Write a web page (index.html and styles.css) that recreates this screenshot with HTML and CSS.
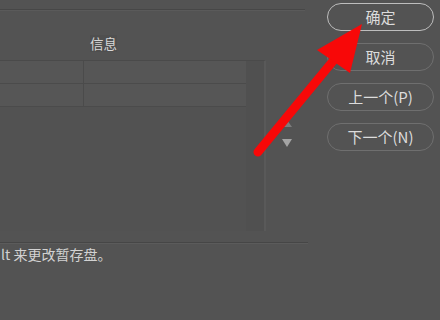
FILE: index.html
```html
<!DOCTYPE html>
<html lang="zh">
<head>
<meta charset="utf-8">
<link rel="stylesheet" href="styles.css">
</head>
<body>
<div class="page">
  <div class="left">
    <div class="top-rule"></div>
    <div class="head"><span class="head-label">信息</span></div>
    <div class="mid">
      <div class="listbox">
        <div class="rows">
          <div class="row"><div class="c1"></div><div class="c2"></div></div>
          <div class="row"><div class="c1"></div><div class="c2"></div></div>
        </div>
        <div class="scroll"></div>
      </div>
      <div class="spin">
        <span class="tri up"></span>
        <span class="tri down"></span>
      </div>
    </div>
    <div class="bottom-rule"></div>
    <div class="note">lt 来更改暂存盘。</div>
  </div>
  <div class="buttons">
    <div class="btn focus">确定</div>
    <div class="btn">取消</div>
    <div class="btn">上一个(P)</div>
    <div class="btn">下一个(N)</div>
  </div>
  <svg class="arrow" width="440" height="320" viewBox="0 0 440 320">
    <line x1="258" y1="152" x2="338" y2="55" stroke="#f80808" stroke-width="9" stroke-linecap="round"/>
    <polygon points="362,24 317,50 350,73" fill="#f80808"/>
  </svg>
</div>
</body>
</html>
```
FILE: styles.css
```css
html, body {
  margin: 0;
  padding: 0;
  background: #535353;
}
.page {
  position: relative;
  width: 440px;
  height: 320px;
  overflow: hidden;
  display: flex;
  font-family: "Noto Sans CJK SC", "Noto Sans", sans-serif;
  color: #d4d4d4;
}
.left {
  width: 308px;
  display: flex;
  flex-direction: column;
}
.top-rule {
  margin-top: 9px;
  width: 305px;
  height: 1px;
  background: #474747;
  border-bottom: 1px solid #5a5a5a;
}
.head {
  height: 49px;
  display: flex;
  align-items: flex-end;
  padding-left: 90px;
  padding-bottom: 8px;
  box-sizing: border-box;
}
.head-label {
  font-size: 13.5px;
  line-height: 17px;
  background: #4f4f4f;
  color: #d8d8d8;
}
.mid {
  display: flex;
  height: 171px;
}
.listbox {
  width: 266px;
  display: flex;
  background: #525252;
  border-top: 1px solid #4a4a4a;
  border-right: 2px solid #595959;
  box-sizing: border-box;
}
.rows {
  width: 246px;
}
.row {
  display: flex;
  height: 23px;
  border-bottom: 1px solid #4b4b4b;
  background: #565656;
  box-sizing: border-box;
}
.c1 {
  width: 83px;
  border-right: 1px solid #4b4b4b;
}
.c2 {
  flex: 1;
}
.scroll {
  width: 18px;
  background: #505050;
}
.spin {
  flex: 1;
  display: flex;
  flex-direction: column;
  align-items: center;
  padding-top: 60px;
  gap: 12px;
}
.tri {
  width: 0;
  height: 0;
  border-left: 5px solid transparent;
  border-right: 5px solid transparent;
}
.tri.up {
  border-bottom: 7px solid #7d7d7d;
}
.tri.down {
  border-top: 8px solid #a4a4a4;
}
.bottom-rule {
  margin-top: 11px;
  width: 308px;
  height: 1px;
  background: #464646;
  border-bottom: 1px solid #5b5b5b;
}
.note {
  font-size: 14px;
  line-height: 18px;
  margin-top: 1px;
  padding-left: 1px;
  color: #d2d2d2;
  white-space: nowrap;
}
.buttons {
  margin-left: 19px;
  padding-top: 3px;
  display: flex;
  flex-direction: column;
  gap: 12px;
}
.btn {
  width: 107px;
  height: 28px;
  box-sizing: border-box;
  border: 1.5px solid #6f6f6f;
  border-radius: 14px;
  font-size: 15px;
  line-height: 25px;
  text-align: center;
  color: #dcdcdc;
}
.btn.focus {
  border-color: #bdbdbd;
}
.arrow {
  position: absolute;
  left: 0;
  top: 0;
  pointer-events: none;
}
```
